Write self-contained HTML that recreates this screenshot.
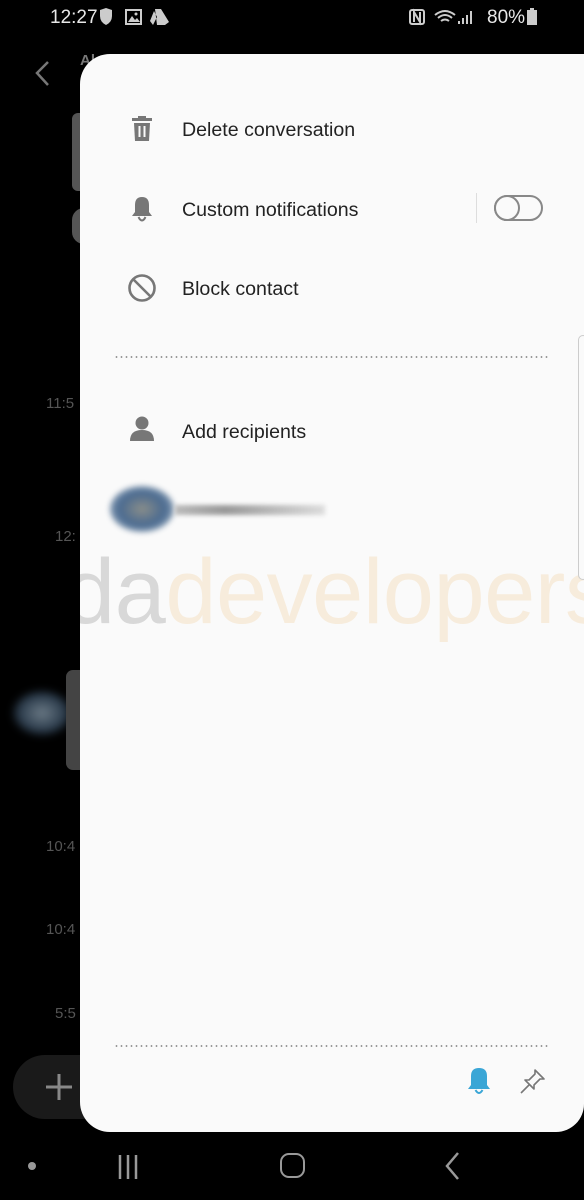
<!DOCTYPE html>
<html><head><meta charset="utf-8"><style>
*{margin:0;padding:0;box-sizing:border-box}
body{width:584px;height:1200px;background:#000;position:relative;overflow:hidden;font-family:"Liberation Sans",sans-serif}
.abs{position:absolute}
.sb{color:#e8e8e8;font-size:19px;top:7px}
.panel{left:80px;top:54px;width:504px;height:1078px;background:#fafafa;border-radius:30px 0 28px 30px;overflow:hidden}
.item{position:absolute;left:102px;font-size:19.6px;color:#222}
.ts{color:#555;font-size:15px}
.dots{position:absolute;left:34px;width:434px;height:2px;background-image:radial-gradient(circle,#999 0.8px,transparent 1px);background-size:5px 2px}
</style></head><body>
<div class="abs sb" style="left:50px">12:27</div>
<svg class="abs" style="left:98px;top:8px" width="72" height="18" viewBox="0 0 72 18">
<path d="M2 2 L8 0 L14 2 L14 8 Q14 14 8 17 Q2 14 2 8Z" fill="#ccc"/>
<rect x="28" y="2" width="15" height="14" fill="none" stroke="#ccc" stroke-width="2"/><path d="M30 14 L34 8 L37 12 L39 10 L42 14Z" fill="#ccc"/><circle cx="38" cy="6" r="1.5" fill="#ccc"/>
<path d="M57 1 L63 1 L71 14 L67 17 L59 17 Z M56 3 L52 13 L55 17 L59 9Z" fill="#ccc"/>
</svg>
<svg class="abs" style="left:408px;top:7px" width="140" height="20" viewBox="0 0 140 20">
<rect x="2" y="3" width="14" height="14" rx="2" fill="none" stroke="#ccc" stroke-width="2"/><path d="M6 15 V5 L12 15 V5" stroke="#ccc" stroke-width="2" fill="none"/>
<path d="M27 8 Q37 0 47 8 M30 11 Q37 5 44 11 M33 14 Q37 11 41 14" stroke="#ccc" stroke-width="2" fill="none"/>
<path d="M50 17 h2 v-3 h-2z M54 17 h2 v-6 h-2z M58 17 h2 v-9 h-2z M62 17 h2 v-13 h-2z" fill="#ccc"/>
<rect x="119" y="3" width="10" height="15" fill="#ccc"/><rect x="122" y="1" width="4" height="2" fill="#ccc"/>
</svg>
<div class="abs sb" style="left:487px">80%</div>
<svg class="abs" style="left:32px;top:60px" width="20" height="28"><path d="M16 2 L5 13 L16 25" stroke="#777" stroke-width="2.5" fill="none"/></svg>
<div class="abs" style="left:80px;top:52px;color:#777;font-size:15px;font-weight:bold">Al</div>
<div class="abs" style="left:72px;top:113px;width:12px;height:78px;background:#555;border-radius:6px 0 0 6px"></div>
<div class="abs" style="left:72px;top:208px;width:12px;height:36px;background:#555;border-radius:18px 0 0 18px"></div>
<div class="abs ts" style="left:46px;top:395px">11:5</div>
<div class="abs ts" style="left:55px;top:528px">12:</div>
<div class="abs" style="left:12px;top:690px;width:60px;height:46px;border-radius:50%;background:radial-gradient(#6b7a86,#2a3a4a 55%,#000 75%);filter:blur(4px)"></div>
<div class="abs" style="left:66px;top:670px;width:14px;height:100px;background:#444;border-radius:7px 0 0 7px"></div>
<div class="abs ts" style="left:46px;top:838px">10:4</div>
<div class="abs ts" style="left:46px;top:921px">10:4</div>
<div class="abs ts" style="left:55px;top:1005px">5:5</div>
<div class="abs" style="left:13px;top:1055px;width:100px;height:64px;background:#1a1a1a;border-radius:32px"></div>
<svg class="abs" style="left:44px;top:1072px" width="30" height="30"><path d="M15 2 V28 M2 15 H28" stroke="#888" stroke-width="3"/></svg>

<div class="abs panel">
 <svg class="abs" style="left:50px;top:60px" width="24" height="28" viewBox="0 0 24 28"><path d="M8 2 H16 V4 H22 V7 H2 V4 H8Z" fill="#777"/><path d="M4 9 H20 L19 27 H5Z" fill="#777"/><path d="M9.5 12 V23 M14.5 12 V23" stroke="#fafafa" stroke-width="2"/></svg>
 <div class="item" style="top:65px">Delete conversation</div>
 <svg class="abs" style="left:50px;top:141px" width="24" height="28" viewBox="0 0 24 28"><path d="M12 2 Q5 2 5 10 V17 L2 21 H22 L19 17 V10 Q19 2 12 2Z" fill="#777"/><path d="M8.5 22 Q12 29 15.5 22" stroke="#777" stroke-width="2" fill="none"/></svg>
 <div class="item" style="top:145px">Custom notifications</div>
 <div class="abs" style="left:396px;top:139px;width:1px;height:30px;background:#ddd"></div>
 <div class="abs" style="left:414px;top:141px;width:49px;height:26px;border:2px solid #888;border-radius:13px"></div>
 <div class="abs" style="left:414px;top:141px;width:26px;height:26px;border:2px solid #888;border-radius:50%;background:#fafafa"></div>
 <svg class="abs" style="left:46px;top:218px" width="32" height="32" viewBox="0 0 32 32"><circle cx="16" cy="16" r="12.5" stroke="#777" stroke-width="2.6" fill="none"/><path d="M7 7 L25 25" stroke="#777" stroke-width="2.6"/></svg>
 <div class="item" style="top:224px">Block contact</div>
 <div class="dots" style="top:302px"></div>
 <svg class="abs" style="left:48px;top:360px" width="28" height="28" viewBox="0 0 28 28"><circle cx="14" cy="9" r="6.5" fill="#777"/><path d="M2 27 Q2 16 14 16 Q26 16 26 27Z" fill="#777"/></svg>
 <div class="item" style="top:367px">Add recipients</div>
 <div class="abs" style="left:30px;top:432px;width:64px;height:46px;border-radius:50%;background:radial-gradient(#8a8e8a,#4a6a90 50%,#9fb0c0 80%,#fafafa 100%);filter:blur(3px)"></div>
 <div class="abs" style="left:95px;top:451px;width:150px;height:10px;background:linear-gradient(90deg,#bbb,#999,#bbb,#ddd);filter:blur(2px)"></div>
 <div class="abs" style="left:-16px;top:486px;font-size:92px;letter-spacing:-0.5px;white-space:nowrap;font-family:'Liberation Sans',sans-serif"><span style="color:#d8d8d8">da</span><span style="color:#f7ecdc">developers</span></div>
 <div class="dots" style="top:991px"></div>
 <svg class="abs" style="left:386px;top:1013px" width="26" height="28" viewBox="0 0 26 28"><path d="M13 1 Q5 1 5 9 V18 L2 22 H24 L21 18 V9 Q21 1 13 1Z" fill="#3aa6d6"/><path d="M9.5 23 Q13 29 16.5 23" stroke="#3aa6d6" stroke-width="2" fill="none"/></svg>
 <svg class="abs" style="left:440px;top:1014px" width="26" height="26" viewBox="0 0 26 26"><path d="M15 2 L24 11 L20 11 L14 17 L14 21 L5 12 L9 12 L15 6Z" stroke="#777" stroke-width="1.6" fill="none" stroke-linejoin="round"/><path d="M9 17 L1 25" stroke="#777" stroke-width="1.6"/></svg>
</div>
<div class="abs" style="left:578px;top:335px;width:10px;height:245px;border:1px solid #ccc;border-radius:8px;background:#fafafa"></div>

<div class="abs" style="left:28px;top:1162px;width:8px;height:8px;border-radius:50%;background:#999"></div>
<svg class="abs" style="left:117px;top:1153px" width="24" height="28"><path d="M3 2 V26 M11 2 V26 M19 2 V26" stroke="#999" stroke-width="2.5"/></svg>
<div class="abs" style="left:280px;top:1153px;width:25px;height:25px;border:2.5px solid #999;border-radius:9px"></div>
<svg class="abs" style="left:442px;top:1151px" width="20" height="30"><path d="M16 2 L5 15 L16 28" stroke="#999" stroke-width="2.5" fill="none"/></svg>
</body></html>
